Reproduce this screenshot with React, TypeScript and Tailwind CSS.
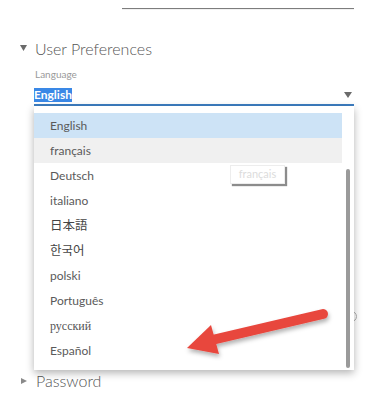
import React from "react";

const items: { label: string; font?: string }[] = [
  { label: "English" },
  { label: "français" },
  { label: "Deutsch" },
  { label: "italiano" },
  { label: "日本語", font: "cjk" },
  { label: "한국어", font: "cjk" },
  { label: "polski" },
  { label: "Português" },
  { label: "русский", font: "serif" },
  { label: "Español" },
];

export default function App() {
  return (
    <div
      className="relative w-[376px] h-[400px] overflow-hidden bg-white"
      style={{ fontFamily: "Lato, 'Noto Sans', sans-serif" }}
    >
      <div className="h-[8px]" />
      <div className="ml-[122px] w-[232px] h-px bg-[#7d7d7d]" />
      <div className="ml-[122px] w-[232px] h-px bg-[#f1f1f1]" />

      {/* heading */}
      <div className="mt-[29px] flex h-[20px] pl-[20px]">
        <svg width="7" height="6" viewBox="0 0 7 6" className="mt-[6px]">
          <polygon points="0,0 7,0 3.5,6" fill="#6a6a6a" />
        </svg>
        <span className="ml-[8px] text-[16px] leading-[20px] font-light text-[#555]">
          User Preferences
        </span>
      </div>

      {/* field */}
      <div className="ml-[34px] w-[320px]">
        <div className="mt-[9px] h-[12px] pl-px text-[10px] leading-[12px] text-[#9a9a9a]">
          Language
        </div>
        <div className="mt-[8px] flex h-[16px] items-start justify-between">
          <span className="bg-[#3a88e6] text-[12px] leading-[14px] font-bold text-white">
            English
          </span>
          <svg width="8" height="6" viewBox="0 0 8 6" className="mt-[4px] mr-[2px]">
            <polygon points="0,0 8,0 4,6" fill="#6b6b6b" />
          </svg>
        </div>
        <div className="h-[2px] bg-[#3d7ec2]" />
      </div>

      {/* password */}
      <div className="mt-[265px] flex h-[20px] pl-[21px]">
        <svg width="6" height="6" viewBox="0 0 6 6" className="mt-[7px]">
          <polygon points="0,0 6,3 0,6" fill="#8a8a8a" />
        </svg>
        <span className="ml-[9px] text-[16px] leading-[20px] font-light text-[#555]">
          Password
        </span>
      </div>

      {/* radio peeking behind panel */}
      <div className="absolute left-[346px] top-[311px] h-[11px] w-[11px] rounded-full border border-[#b0b0b0]" />

      {/* dropdown panel */}
      <div className="absolute left-[34px] top-[106px] flex h-[264px] w-[320px] bg-white shadow-[0_3px_8px_rgba(0,0,0,0.3)]">
        <div className="w-[308px] pt-[7px]">
          {items.map((it, i) => (
            <div
              key={it.label}
              className={
                "flex h-[25px] items-center pl-[16px] text-[12px] text-[#5a5a5a] " +
                (i === 0 ? "bg-[#cde3f6]" : i === 1 ? "bg-[#f0f0f0]" : "")
              }
              style={
                it.font === "cjk"
                  ? { fontFamily: "'Noto Sans CJK JP', 'Noto Sans CJK KR', sans-serif", fontSize: 12.5, color: "#444" }
                  : it.font === "serif"
                  ? { fontFamily: "'Liberation Serif', serif", fontSize: 12, color: "#555" }
                  : undefined
              }
            >
              {it.label}
            </div>
          ))}
        </div>
        <div className="flex w-[12px] flex-col items-start pt-[63px] pb-[2px] pl-[4px]">
          <div className="h-full w-[4px] rounded-full bg-[#9a9a9a]" />
        </div>
      </div>

      {/* tooltip */}
      <div className="absolute left-[230px] top-[165px] flex h-[19px] w-[55px] items-center justify-center border border-[#ededed] bg-white text-[11px] text-[#dcdcdc] shadow-[2px_2px_1px_rgba(0,0,0,0.45)]">
        français
      </div>

      {/* red arrow */}
      <svg className="absolute left-0 top-0" width="376" height="400" viewBox="0 0 376 400">
        <defs>
          <filter id="sh" x="-20%" y="-20%" width="140%" height="160%">
            <feDropShadow dx="1" dy="3" stdDeviation="2" floodColor="#000" floodOpacity="0.3" />
          </filter>
        </defs>
        <g filter="url(#sh)">
          <line x1="323" y1="314" x2="212" y2="340" stroke="#e8473e" strokeWidth="10" strokeLinecap="round" />
          <polygon points="187,348 211,325 219,354" fill="#e8473e" />
        </g>
      </svg>
    </div>
  );
}
